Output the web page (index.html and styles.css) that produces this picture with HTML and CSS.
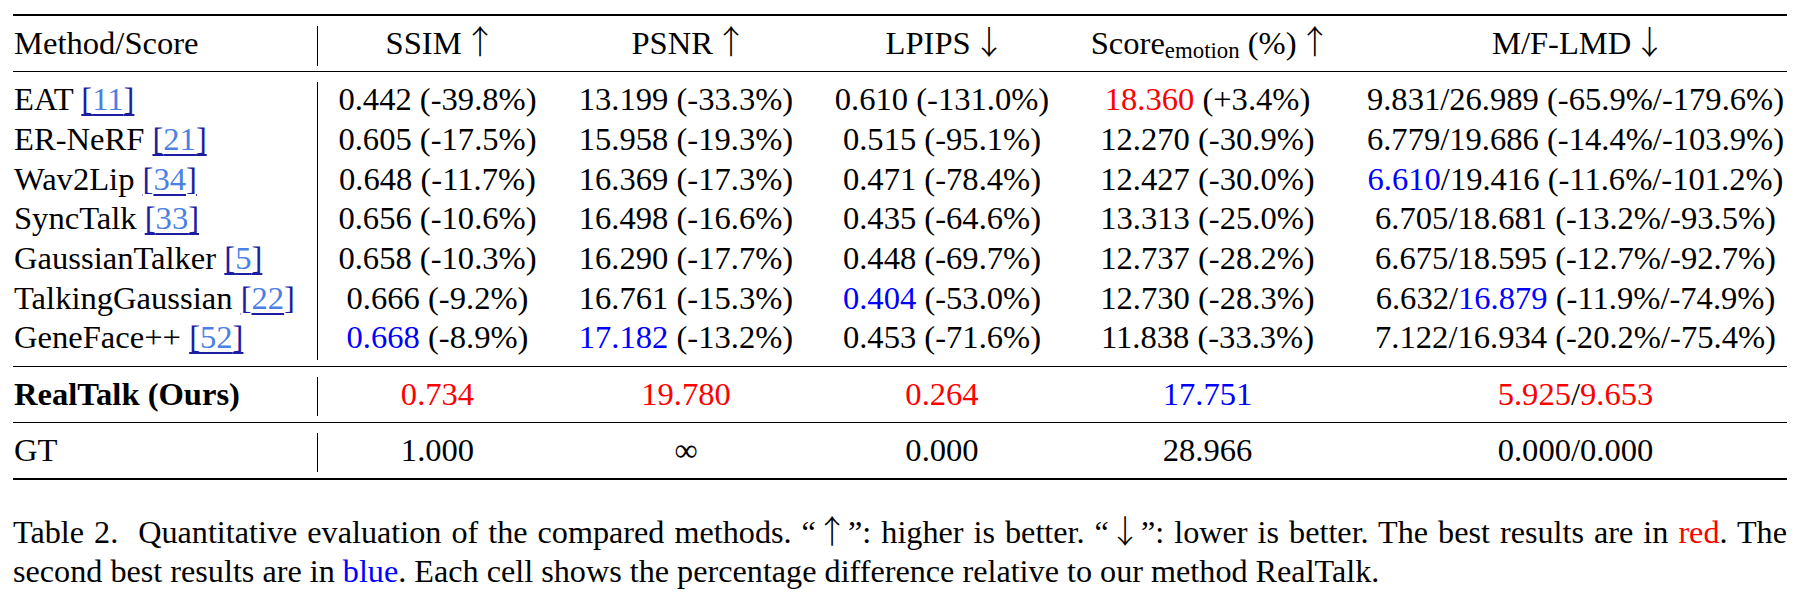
FILE: index.html
```html
<!DOCTYPE html>
<html lang="en">
<head>
<meta charset="utf-8">
<title>Table 2</title>
<link rel="stylesheet" href="styles.css">
</head>
<body>
<div class="page">
  <div class="tbl">
    <div class="grp">
      <div class="c m">Method/Score</div>
      <div class="c">SSIM<span class="arr">↑</span></div>
      <div class="c">PSNR<span class="arr">↑</span></div>
      <div class="c">LPIPS<span class="arr">↓</span></div>
      <div class="c">Score<span class="sub">emotion</span> (%)<span class="arr">↑</span></div>
      <div class="c l">M/F-LMD<span class="arr">↓</span></div>
    </div>
    <div class="grp">
      <div class="c m">EAT <span class="cite">[<span class="num">11</span>]</span></div>
      <div class="c">0.442 (-39.8%)</div>
      <div class="c">13.199 (-33.3%)</div>
      <div class="c">0.610 (-131.0%)</div>
      <div class="c"><span class="red">18.360</span> (+3.4%)</div>
      <div class="c l">9.831/26.989 (-65.9%/-179.6%)</div>

      <div class="c m">ER-NeRF <span class="cite">[<span class="num">21</span>]</span></div>
      <div class="c">0.605 (-17.5%)</div>
      <div class="c">15.958 (-19.3%)</div>
      <div class="c">0.515 (-95.1%)</div>
      <div class="c">12.270 (-30.9%)</div>
      <div class="c l">6.779/19.686 (-14.4%/-103.9%)</div>

      <div class="c m">Wav2Lip <span class="cite">[<span class="num">34</span>]</span></div>
      <div class="c">0.648 (-11.7%)</div>
      <div class="c">16.369 (-17.3%)</div>
      <div class="c">0.471 (-78.4%)</div>
      <div class="c">12.427 (-30.0%)</div>
      <div class="c l"><span class="blue">6.610</span>/19.416 (-11.6%/-101.2%)</div>

      <div class="c m">SyncTalk <span class="cite">[<span class="num">33</span>]</span></div>
      <div class="c">0.656 (-10.6%)</div>
      <div class="c">16.498 (-16.6%)</div>
      <div class="c">0.435 (-64.6%)</div>
      <div class="c">13.313 (-25.0%)</div>
      <div class="c l">6.705/18.681 (-13.2%/-93.5%)</div>

      <div class="c m">GaussianTalker <span class="cite">[<span class="num">5</span>]</span></div>
      <div class="c">0.658 (-10.3%)</div>
      <div class="c">16.290 (-17.7%)</div>
      <div class="c">0.448 (-69.7%)</div>
      <div class="c">12.737 (-28.2%)</div>
      <div class="c l">6.675/18.595 (-12.7%/-92.7%)</div>

      <div class="c m">TalkingGaussian <span class="cite">[<span class="num">22</span>]</span></div>
      <div class="c">0.666 (-9.2%)</div>
      <div class="c">16.761 (-15.3%)</div>
      <div class="c"><span class="blue">0.404</span> (-53.0%)</div>
      <div class="c">12.730 (-28.3%)</div>
      <div class="c l">6.632/<span class="blue">16.879</span> (-11.9%/-74.9%)</div>

      <div class="c m">GeneFace++ <span class="cite">[<span class="num">52</span>]</span></div>
      <div class="c"><span class="blue">0.668</span> (-8.9%)</div>
      <div class="c"><span class="blue">17.182</span> (-13.2%)</div>
      <div class="c">0.453 (-71.6%)</div>
      <div class="c">11.838 (-33.3%)</div>
      <div class="c l">7.122/16.934 (-20.2%/-75.4%)</div>
    </div>
    <div class="grp">
      <div class="c m"><b>RealTalk (Ours)</b></div>
      <div class="c"><span class="red">0.734</span></div>
      <div class="c"><span class="red">19.780</span></div>
      <div class="c"><span class="red">0.264</span></div>
      <div class="c"><span class="blue">17.751</span></div>
      <div class="c l"><span class="red">5.925</span>/<span class="red">9.653</span></div>
    </div>
    <div class="grp">
      <div class="c m">GT</div>
      <div class="c">1.000</div>
      <div class="c">∞</div>
      <div class="c">0.000</div>
      <div class="c">28.966</div>
      <div class="c l">0.000/0.000</div>
    </div>
  </div>
  <div class="caption">
    <div class="cap1">Table 2.&nbsp; Quantitative evaluation of the compared methods. “<span class="carr">↑</span>”: higher is better. “<span class="carr">↓</span>”: lower is better. The best results are in <span class="red">red</span>. The</div>
    <div class="cap2">second best results are in <span class="blue">blue</span>. Each cell shows the percentage difference relative to our method RealTalk.</div>
  </div>
</div>
</body>
</html>
```

FILE: styles.css
```css
html, body {
  margin: 0;
  background: #ffffff;
}

body {
  font-family: "Liberation Serif", "Times New Roman", Times, serif;
  color: #000000;
}

.page {
  width: 1774px;
  padding: 14px 0 0 13px;
}

.tbl {
  border-top: 2px solid #000000;
  border-bottom: 2px solid #000000;
}

.grp {
  display: grid;
  grid-template-columns: 305px 239px 258px 254px 277px 441px;
  padding: 10px 0 5.5px;
  border-bottom: 1px solid #000000;
}

.grp:last-child {
  border-bottom: none;
}

.c {
  font-size: 32.6px;
  line-height: 34px;
  padding-bottom: 5.7px;
  text-align: center;
  white-space: nowrap;
}

.c.m {
  text-align: left;
  padding-left: 1px;
  border-right: 1px solid #000000;
}

.c.l {
  padding-left: 18px;
}

.sub {
  font-size: 0.7em;
  line-height: 0;
  vertical-align: -0.16em;
}

.arr,
.carr {
  font-family: "Noto Sans CJK JP", "Noto Sans CJK SC", "DejaVu Sans", sans-serif;
  font-weight: 300;
  line-height: 0;
}

.arr {
  margin-left: 0.06em;
  margin-right: -0.21em;
}

.cite {
  color: #1d1da3;
  text-decoration: underline;
  text-decoration-color: #1d1da3;
  text-decoration-thickness: 2px;
  text-underline-offset: 4px;
}

.cite .num {
  color: #4a80e6;
}

.red {
  color: #ff0000;
}

.blue {
  color: #0000ff;
}

.caption {
  margin-top: 33px;
  font-size: 32.2px;
  line-height: 38.7px;
}

.cap1 {
  text-align: justify;
  text-align-last: justify;
}
```
